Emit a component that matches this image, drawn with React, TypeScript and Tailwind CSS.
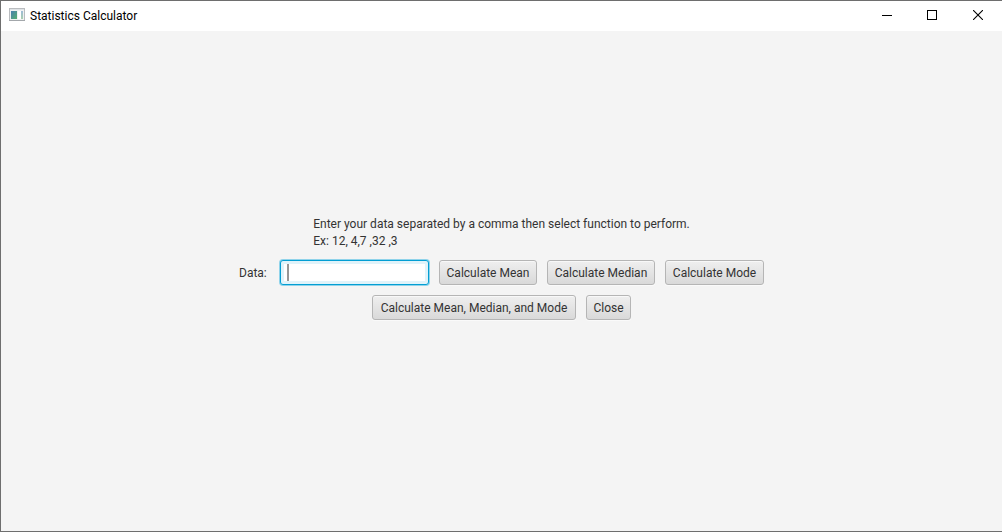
import React, { useState } from 'react';

const buttonClass =
  'h-[25px] rounded-[3px] border border-[#b5b5b5] bg-linear-to-b from-[#efefef] to-[#d9d9d9] px-[6px] text-xs leading-4 whitespace-nowrap shadow-[inset_0_1px_0_#f8f8f8,0_1px_0_#fafafa]';

function ActionButton({ children, width, onClick }: { children: React.ReactNode; width: string; onClick?: () => void }) {
  return (
    <button type="button" onClick={onClick} className={`${buttonClass} ${width}`}>
      {children}
    </button>
  );
}

function AppIcon() {
  return (
    <svg width="16" height="16" viewBox="0 0 16 16" aria-hidden="true" shapeRendering="crispEdges">
      <defs>
        <linearGradient id="pane" x1="0" y1="0" x2="1" y2="1">
          <stop offset="0" stopColor="#4a7fb0" />
          <stop offset="1" stopColor="#57b070" />
        </linearGradient>
        <linearGradient id="side" x1="0" y1="0" x2="0" y2="1">
          <stop offset="0" stopColor="#9dbbd8" />
          <stop offset="1" stopColor="#a9cfae" />
        </linearGradient>
      </defs>
      <rect x="0.5" y="0.5" width="15" height="12" fill="#f0f1f2" stroke="#b9bcbf" />
      <rect x="1" y="1" width="14" height="1" fill="#dfe3e6" />
      <rect x="0" y="12" width="16" height="1" fill="#a3a7ab" />
      <rect x="2" y="3" width="6" height="8" fill="url(#pane)" />
      <rect x="9" y="3" width="3" height="8" fill="#ffffff" />
      <rect x="12" y="3" width="2" height="8" fill="url(#side)" />
    </svg>
  );
}

export default function App() {
  const [data, setData] = useState('');
  const [open, setOpen] = useState(true);
  if (!open) return null;

  return (
    <div className="flex min-h-screen flex-col border-t border-b border-l border-[#6e6e6e] bg-[#f4f4f4] font-['Roboto','Liberation_Sans',sans-serif] text-xs text-[#333333]">
      <header className="flex h-[30px] items-center justify-between bg-white text-black">
        <div className="flex items-center gap-[5px] pl-2">
          <AppIcon />
          <h1 className="text-xs leading-4">Statistics Calculator</h1>
        </div>
        <div className="flex h-7 self-start">
          <button type="button" aria-label="Minimize" className="flex w-[46px] items-center justify-center">
            <svg width="10" height="10" viewBox="0 0 10 10" shapeRendering="crispEdges" aria-hidden="true">
              <path d="M0 5.5H10" stroke="#000" />
            </svg>
          </button>
          <button type="button" aria-label="Maximize" className="flex w-11 items-center justify-center">
            <svg width="10" height="10" viewBox="0 0 10 10" shapeRendering="crispEdges" aria-hidden="true">
              <rect x="0.5" y="0.5" width="9" height="9" fill="none" stroke="#000" />
            </svg>
          </button>
          <button type="button" aria-label="Close window" className="flex w-12 items-center justify-center" onClick={() => setOpen(false)}>
            <svg width="10" height="10" viewBox="0 0 10 10" aria-hidden="true">
              <path d="M0 0L10 10M10 0L0 10" stroke="#000" strokeWidth="1.1" />
            </svg>
          </button>
        </div>
      </header>

      <main className="flex grow flex-col items-center justify-center gap-2.5 pb-[26px]">
        <p className="leading-[17px]">
          Enter your data separated by a comma then select function to perform.
          <br />
          Ex: 12, 4,7 ,32 ,3
        </p>
        <div className="flex items-center gap-2.5">
          <label htmlFor="data" className="w-[31px] leading-4">
            Data:
          </label>
          <div className="relative">
            <input
              id="data"
              type="text"
              value={data}
              onChange={(e) => setData(e.target.value)}
              className="block h-[25px] w-[149px] rounded-[3px] border border-[#039ed3] bg-white px-[7px] caret-transparent shadow-[inset_0_0_0_3px_#e0f3fa,0_0_0_1px_#8fd3ea] outline-none"
            />
            {data === '' && <span className="pointer-events-none absolute top-1 left-[7px] h-[17px] w-0.5 bg-[#969696]" />}
          </div>
          <ActionButton width="min-w-[98px]">Calculate Mean</ActionButton>
          <ActionButton width="min-w-[108px]">Calculate Median</ActionButton>
          <ActionButton width="min-w-[99px]">Calculate Mode</ActionButton>
        </div>
        <div className="flex gap-2.5">
          <ActionButton width="min-w-[204px]">Calculate Mean, Median, and Mode</ActionButton>
          <ActionButton width="min-w-[45px]" onClick={() => setOpen(false)}>
            Close
          </ActionButton>
        </div>
      </main>
    </div>
  );
}
